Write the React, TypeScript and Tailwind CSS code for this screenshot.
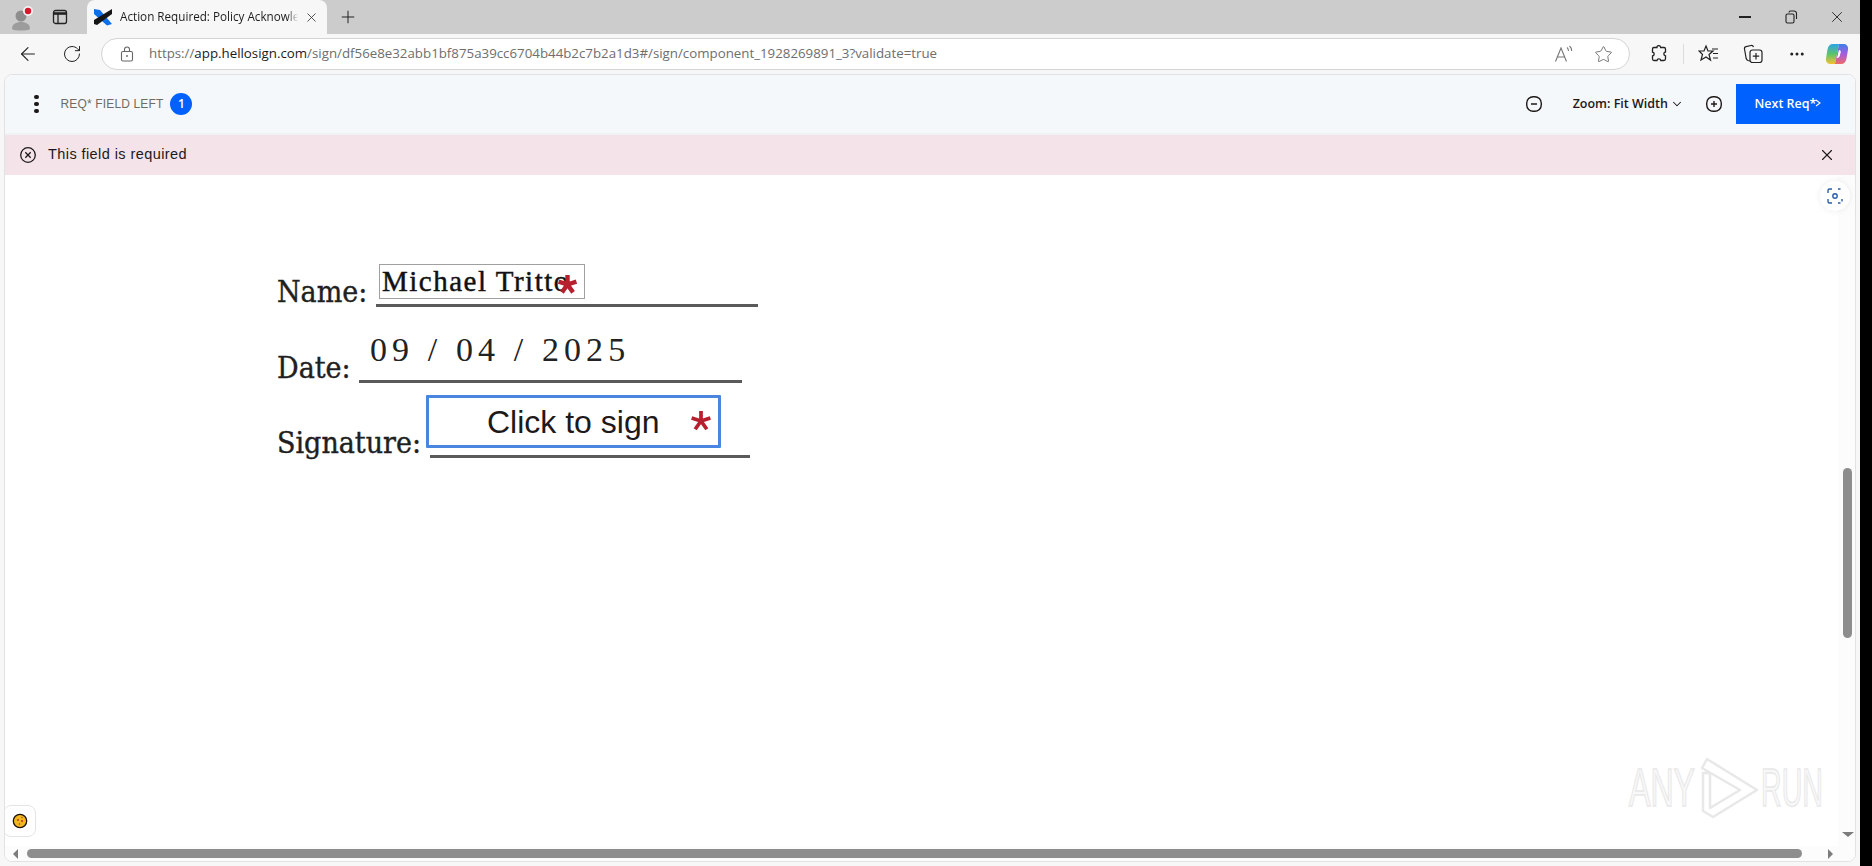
import { ArrowLeft, ChevronDown, Ellipsis, Plus, RotateCw, Star, X } from 'lucide-react'

const uiFont = "font-['Open_Sans','Liberation_Sans',sans-serif]"

function Avatar() {
	return (
		<svg width="28" height="28" viewBox="0 0 28 28" className="shrink-0">
			<circle cx="12" cy="13" r="5.500" fill="#8e8e8e" />
			<path d="M3 26c0-5 4-7 9-7s9 2 9 7c-2 2-16 2-18 0z" fill="#9c9c9c" />
			<circle cx="19" cy="8" r="5" fill="#f2f2f2" />
			<circle cx="19" cy="8" r="3.200" fill="#d8182c" />
		</svg>
	)
}

function SidebarIcon() {
	return (
		<svg width="16" height="16" viewBox="0 0 16 16" fill="none" stroke="#222" strokeWidth="1.300" className="shrink-0">
			<rect x="1.500" y="1.500" width="13" height="13" rx="2" />
			<path d="M1.500 4.500h13" strokeWidth="2.600" />
			<path d="M6 5v9.500" />
		</svg>
	)
}

function Favicon() {
	return (
		<svg width="18" height="18" viewBox="0 0 18 18" className="shrink-0">
			<path d="M0 1l6 1 12 14-5 1.500L0 6z" fill="#0f6fe8" />
			<path d="M18 1v5L3 17l-3-1V12z" fill="#161616" />
		</svg>
	)
}

function Lock() {
	return (
		<svg width="14" height="16" viewBox="0 0 14 16" fill="none" stroke="#666" strokeWidth="1.100" className="shrink-0">
			<rect x="1.500" y="5.500" width="11" height="9.500" rx="1.500" />
			<path d="M4.500 5.500V3.500a2.500 2.500 0 0 1 5 0v2" />
			<circle cx="7" cy="10" r="0.900" fill="#666" stroke="none" />
		</svg>
	)
}

function ReadAloud() {
	return (
		<svg width="20" height="18" viewBox="0 0 20 18" fill="none" stroke="#777" strokeWidth="1.100" className="shrink-0">
			<path d="M1.500 16.500L7 3l5.500 13.500M3.500 12h7" />
			<path d="M13 2.500c1 .8 1.500 2 1.500 3.500M15.500 1c1.500 1.200 2.200 3 2.200 5" />
		</svg>
	)
}

function Extensions() {
	return (
		<svg width="20" height="20" viewBox="0 0 20 20" fill="none" stroke="#222" strokeWidth="1.300" className="shrink-0">
			<path d="M8 2.500c1-1.500 3.500-1 3.700 1h3.300a1.500 1.500 0 0 1 1.500 1.500v3c-2 .2-2.500 3.300 0 3.800v3a1.700 1.700 0 0 1-1.700 1.700h-3c-.5-2.300-3.500-2-3.800 0H5a1.500 1.500 0 0 1-1.500-1.500v-3c2.300-.3 2.300-3.500 0-3.800V5A1.500 1.500 0 0 1 5 3.500h3z" />
		</svg>
	)
}

function Favorites() {
	return (
		<svg width="22" height="20" viewBox="0 0 22 20" fill="none" stroke="#222" strokeWidth="1.200" className="shrink-0">
			<path d="M8 2l2 5h5l-4 3.500 1.500 5.500L8 13l-5 3 1.500-5.500L1 7h5z" />
			<path d="M14 5h6M15 9.500h5M15 14h5" />
		</svg>
	)
}

function Collections() {
	return (
		<svg width="20" height="20" viewBox="0 0 20 20" fill="none" stroke="#222" strokeWidth="1.200" className="shrink-0">
			<path d="M7 17l-2-.5c-1-.3-1.500-1-1.800-2L1.500 5c-.2-1 .3-2 1.500-2.300L8 1.500c1-.2 2 .2 2.500 1.500" />
			<rect x="7" y="6" width="12" height="12.500" rx="2.500" />
			<path d="M13 9v6.500M9.800 12.200h6.400" />
		</svg>
	)
}

function Copilot() {
	return (
		<svg width="24" height="24" viewBox="0 0 24 24" className="shrink-0">
			<defs>
				<linearGradient id="cpA" x1="0" y1="0" x2="0" y2="1">
					<stop offset="0" stopColor="#2aa4e8" />
					<stop offset="0.500" stopColor="#5cc46a" />
					<stop offset="1" stopColor="#f2c230" />
				</linearGradient>
				<linearGradient id="cpB" x1="0" y1="0" x2="0" y2="1">
					<stop offset="0" stopColor="#3d7ee8" />
					<stop offset="0.500" stopColor="#a55be0" />
					<stop offset="1" stopColor="#ef6a6a" />
				</linearGradient>
			</defs>
			<path d="M8 2h6l-4 20H6c-3.500 0-5.500-2-5-5.500l1.500-9C3 4 5 2 8 2z" fill="url(#cpA)" />
			<path d="M15 2h3c3.500 0 5.500 2 5 5.500l-1.500 9c-.5 3.500-2.500 5.500-5.500 5.500h-6l4-20z" fill="url(#cpB)" />
			<path d="M14 8c1.500 0 2 1 1.700 2.500l-1 3.500c-.5 1.500-1.500 2-3 2 1-1 1.500-5.500 2.300-8z" fill="#fff" />
		</svg>
	)
}

function RoundGlyph({ kind }: { kind: 'minus' | 'plus' }) {
	return (
		<svg width="18" height="18" viewBox="0 0 18 18" fill="none" stroke="#1e1919" strokeWidth="1.400" className="shrink-0">
			<rect x="1.700" y="1.700" width="14.600" height="14.600" rx="6.500" />
			<path d="M6 9h6" />
			{kind === 'plus' && <path d="M9 6v6" />}
		</svg>
	)
}

function RedStar({ size, weight }: { size: number; weight: number }) {
	return (
		<svg width={size} height={size} viewBox="0 0 20 20" stroke="#b7202f" strokeWidth={weight} className="block">
			<path d="M10 10V1M10 10l8.500-2.800M10 10l5.300 7.500M10 10l-5.300 7.500M10 10L1.500 7.200" />
		</svg>
	)
}

function Cookie() {
	return (
		<svg width="16" height="16" viewBox="0 0 16 16">
			<circle cx="8" cy="8" r="6.700" fill="#f3b61f" stroke="#1a1208" strokeWidth="1.300" />
			<circle cx="6" cy="7" r="1" fill="#b5431c" />
			<circle cx="10" cy="8" r="1.100" fill="#c2361d" />
			<circle cx="7.500" cy="11" r="0.800" fill="#8a5a10" />
			<circle cx="10" cy="4.500" r="0.700" fill="#8a5a10" />
		</svg>
	)
}

function ScanIcon() {
	return (
		<svg width="18" height="18" viewBox="0 0 18 18" fill="none" stroke="#2a5ea8" strokeWidth="1.400">
			<path d="M2 6V3.500A1.500 1.500 0 0 1 3.500 2H6M12 2h2.500M16 12v2.500M12 16h2.500M6 16H3.500A1.500 1.500 0 0 1 2 14.500V12" />
			<circle cx="9" cy="9" r="2.200" />
		</svg>
	)
}

function Watermark() {
	return (
		<svg width="200" height="66" viewBox="0 0 200 66" fill="none" className="absolute right-[28px] bottom-[25px]">
			<text transform="translate(2 51) scale(0.595 1)" fontFamily="Liberation Sans" fontSize="54" fill="#f8f8f8" stroke="#e8e8e8" strokeWidth="1.500">ANY</text>
			<path d="M76 18l0 38 10 6 44-27-50-31-5 9 38 22-30 18V18z" stroke="#e8e8e8" strokeWidth="2.500" strokeLinejoin="round" />
			<text transform="translate(134 51) scale(0.53 1)" fontFamily="Liberation Sans" fontSize="54" fill="#f8f8f8" stroke="#e8e8e8" strokeWidth="1.500">RUN</text>
		</svg>
	)
}

const docRows = [
	{ label: 'Name:', labelWidth: 'w-[99px]', lineWidth: 'w-[382px]', height: 'h-[76px]' },
	{ label: 'Date:', labelWidth: 'w-[82px]', lineWidth: 'w-[383px]', height: 'h-[76px]' },
	{ label: 'Signature:', labelWidth: 'w-[153px]', lineWidth: 'w-[320px]', height: 'h-[75px]' },
]

export default function App() {
	return (
		<div className={`flex h-[866px] w-[1872px] overflow-hidden bg-black ${uiFont}`}>
			<div className="flex w-[1860px] flex-col bg-[#f7f7f7]">
				{/* tab strip */}
				<div className="flex h-[34px] items-center bg-[#cccccc]">
					<div className="ml-[9px] w-[43px]"><Avatar /></div>
					<SidebarIcon />
					<div className="ml-[19px] flex h-[34px] w-[240px] items-center rounded-t-lg bg-[#f7f7f7] pl-[7px]">
						<Favicon />
						<div className="ml-[8px] w-[178px] whitespace-nowrap text-[11.700px] text-[#1c1c1c] [mask-image:linear-gradient(90deg,#000_94%,transparent)]">Action Required: Policy Acknowle</div>
						<X size={15} strokeWidth={1.300} className="ml-[6px] text-[#333]" />
					</div>
					<Plus size={20} strokeWidth={1.200} className="ml-[11px] text-[#222]" />
					<div className="ml-auto mr-[14px] flex items-center text-[#222]">
						<div className="h-[1.500px] w-[12px] bg-[#222]" />
						<svg width="14" height="14" viewBox="0 0 14 14" fill="none" stroke="#222" strokeWidth="1.100" className="ml-[33px]">
							<rect x="2" y="4" width="8" height="9" rx="1.500" />
							<path d="M5 2.500c0-.8.500-1.500 1.500-1.500H10a2.500 2.500 0 0 1 2.500 2.500V9" />
						</svg>
						<X size={18} strokeWidth={1.200} className="ml-[30px]" />
					</div>
				</div>

				{/* address bar row */}
				<div className="flex h-[40px] items-center">
					<ArrowLeft size={22} strokeWidth={1.200} className="ml-[17px] text-[#222]" />
					<RotateCw size={20} strokeWidth={1.200} className="ml-[23px] text-[#222]" />
					<div className="ml-[19px] flex h-[32px] w-[1529px] items-center rounded-full border border-[#d4d4d4] bg-white pl-[18px] pr-[16px]">
						<Lock />
						<div className="ml-[15px] whitespace-nowrap text-[13.300px] text-[#6e6e6e]">
							https://<span className="text-[#1a1a1a]">app.hellosign.com</span>/sign/df56e8e32abb1bf875a39cc6704b44b2c7b2a1d3#/sign/component_1928269891_3?validate=true
						</div>
						<div className="ml-auto flex items-center gap-[20px]">
							<ReadAloud />
							<Star size={19} strokeWidth={1.100} className="text-[#666]" />
						</div>
					</div>
					<div className="ml-[19px]"><Extensions /></div>
					<div className="ml-[14px] h-[20px] w-px bg-[#dcdcdc]" />
					<div className="ml-[14px]"><Favorites /></div>
					<div className="ml-[23px]"><Collections /></div>
					<Ellipsis size={18} strokeWidth={2} className="ml-[25px] text-[#222]" />
					<div className="ml-[19px]"><Copilot /></div>
				</div>

				{/* page panel */}
				<div className="mx-[4px] mb-[4px] flex flex-1 flex-col overflow-hidden rounded-lg border border-[#e2e2e2] bg-white">
					<div className="flex h-[60px] items-center border-b-2 border-[#f0f2f4] bg-[#f5f8fb] pr-[15px]">
						<div className="ml-[29px] flex flex-col gap-[2.500px]">
							<div className="size-[4.500px] rounded-full bg-[#1e1919]" />
							<div className="size-[4.500px] rounded-full bg-[#1e1919]" />
							<div className="size-[4.500px] rounded-full bg-[#1e1919]" />
						</div>
						<div className="ml-[22px] whitespace-nowrap font-['Liberation_Sans',sans-serif] text-[12px] tracking-[0.150px] text-[#716b61]">REQ* FIELD LEFT</div>
						<div className="ml-[7px] flex size-[22px] items-center justify-center rounded-full bg-[#0061fe] text-[12px] font-semibold text-white">1</div>
						<div className="ml-auto flex items-center">
							<RoundGlyph kind="minus" />
							<div className="ml-[30px] whitespace-nowrap text-[12.500px] font-semibold text-[#1e1919]">Zoom: Fit Width</div>
							<ChevronDown size={14} strokeWidth={1.800} className="ml-[2px] text-[#1e1919]" />
							<div className="ml-[21px]"><RoundGlyph kind="plus" /></div>
							<div className="ml-[13px] flex h-[40px] w-[104px] items-center justify-center bg-[#0061fe] text-[12.500px] font-semibold text-white">
								Next Req*
								<svg width="6" height="8" viewBox="0 0 6 8" fill="none" stroke="#fff" strokeWidth="1.100" className="-ml-[1px] -mt-[3px]">
									<path d="M1 1l4 3-4 3" />
								</svg>
							</div>
						</div>
					</div>

					<div className="flex h-[40px] items-center bg-[#f4e4e9] pr-[19px]">
						<svg width="18" height="18" viewBox="0 0 18 18" fill="none" stroke="#1e1919" strokeWidth="1.300" className="ml-[14px]">
							<circle cx="9" cy="9" r="7.300" />
							<path d="M6.300 6.300l5.400 5.400M11.700 6.300l-5.400 5.400" />
						</svg>
						<div className="ml-[11px] font-['Liberation_Sans',sans-serif] text-[14.500px] tracking-[0.420px] text-[#1e1919]">This field is required</div>
						<X size={18} strokeWidth={1.500} className="ml-auto text-[#1e1919]" />
					</div>

					<div className="relative flex flex-1">
						{/* document */}
						<div className="flex-1 pl-[272px] pt-[56px]">
							{docRows.map(r => (
								<div key={r.label} className={`flex items-end ${r.height}`}>
									<div className={`${r.labelWidth} -mb-[2px] font-['DejaVu_Serif_Condensed','Liberation_Serif',serif] text-[30px] leading-[34px] text-[#1f1f1f] [-webkit-text-stroke:0.400px_#1f1f1f]`}>{r.label}</div>
									<div className={`${r.lineWidth} h-[3px] bg-[#5a5a5a]`} />
								</div>
							))}
						</div>

						{/* signer fields over the page */}
						<div className="absolute left-[374px] top-[89px] flex h-[35px] w-[206px] items-center overflow-hidden whitespace-nowrap border border-[#a0a0a0] bg-white pl-[2px] font-['Liberation_Serif',serif] text-[29px] tracking-[1.500px] text-[#111] [-webkit-text-stroke:0.450px_#111]">
							Michael Tritto
						</div>
						<div className="absolute left-[552px] top-[99px]"><RedStar size={21} weight={4.200} /></div>
						<div className="absolute left-[365px] top-[155px] whitespace-nowrap font-['Liberation_Serif',serif] text-[34px] leading-[40px] tracking-[5.100px] text-[#222]">09 / 04 / 2025</div>
						<div className="absolute left-[421px] top-[220px] flex h-[53px] w-[295px] items-center rounded-[1px] border-[3px] border-[#4a86e0] bg-white pl-[58px] font-['Liberation_Sans',sans-serif] text-[32px] text-[#1e1919]">
							Click to sign
						</div>
						<div className="absolute left-[685px] top-[235px]"><RedStar size={22} weight={3.400} /></div>

						<div className="absolute right-[5px] top-[6px] flex size-[30px] items-center justify-center rounded-full bg-white shadow-[0_0_6px_rgba(0,0,0,0.08)]"><ScanIcon /></div>
						<div className="absolute bottom-[9px] left-[-2px] flex h-[32px] w-[33px] items-center justify-center rounded-lg border border-[#e4e4e4] bg-white"><Cookie /></div>
						<Watermark />

						{/* vertical scrollbar */}
						<div className="flex w-[17px] flex-col bg-[#fcfcfc] pl-[5px]">
							<div className="mt-[293px] h-[170px] w-[9px] rounded-full bg-[#8d8d8d]" />
							<div className="ml-[-1px] mt-auto mb-[9px] h-0 w-0 border-x-[6px] border-t-[5px] border-x-transparent border-t-[#7c7c7c]" />
						</div>
					</div>

					{/* horizontal scrollbar */}
					<div className="flex h-[15px] items-center bg-[#fcfcfc]">
						<div className="ml-[8px] h-0 w-0 border-y-[5px] border-r-[5px] border-y-transparent border-r-[#7c7c7c]" />
						<div className="ml-[9px] h-[9px] w-[1775px] rounded-full bg-[#8d8d8d]" />
						<div className="ml-[26px] h-0 w-0 border-y-[5px] border-l-[5px] border-y-transparent border-l-[#7c7c7c]" />
					</div>
				</div>
			</div>
			<div className="w-[12px] shrink-0 bg-black" />
		</div>
	)
}
